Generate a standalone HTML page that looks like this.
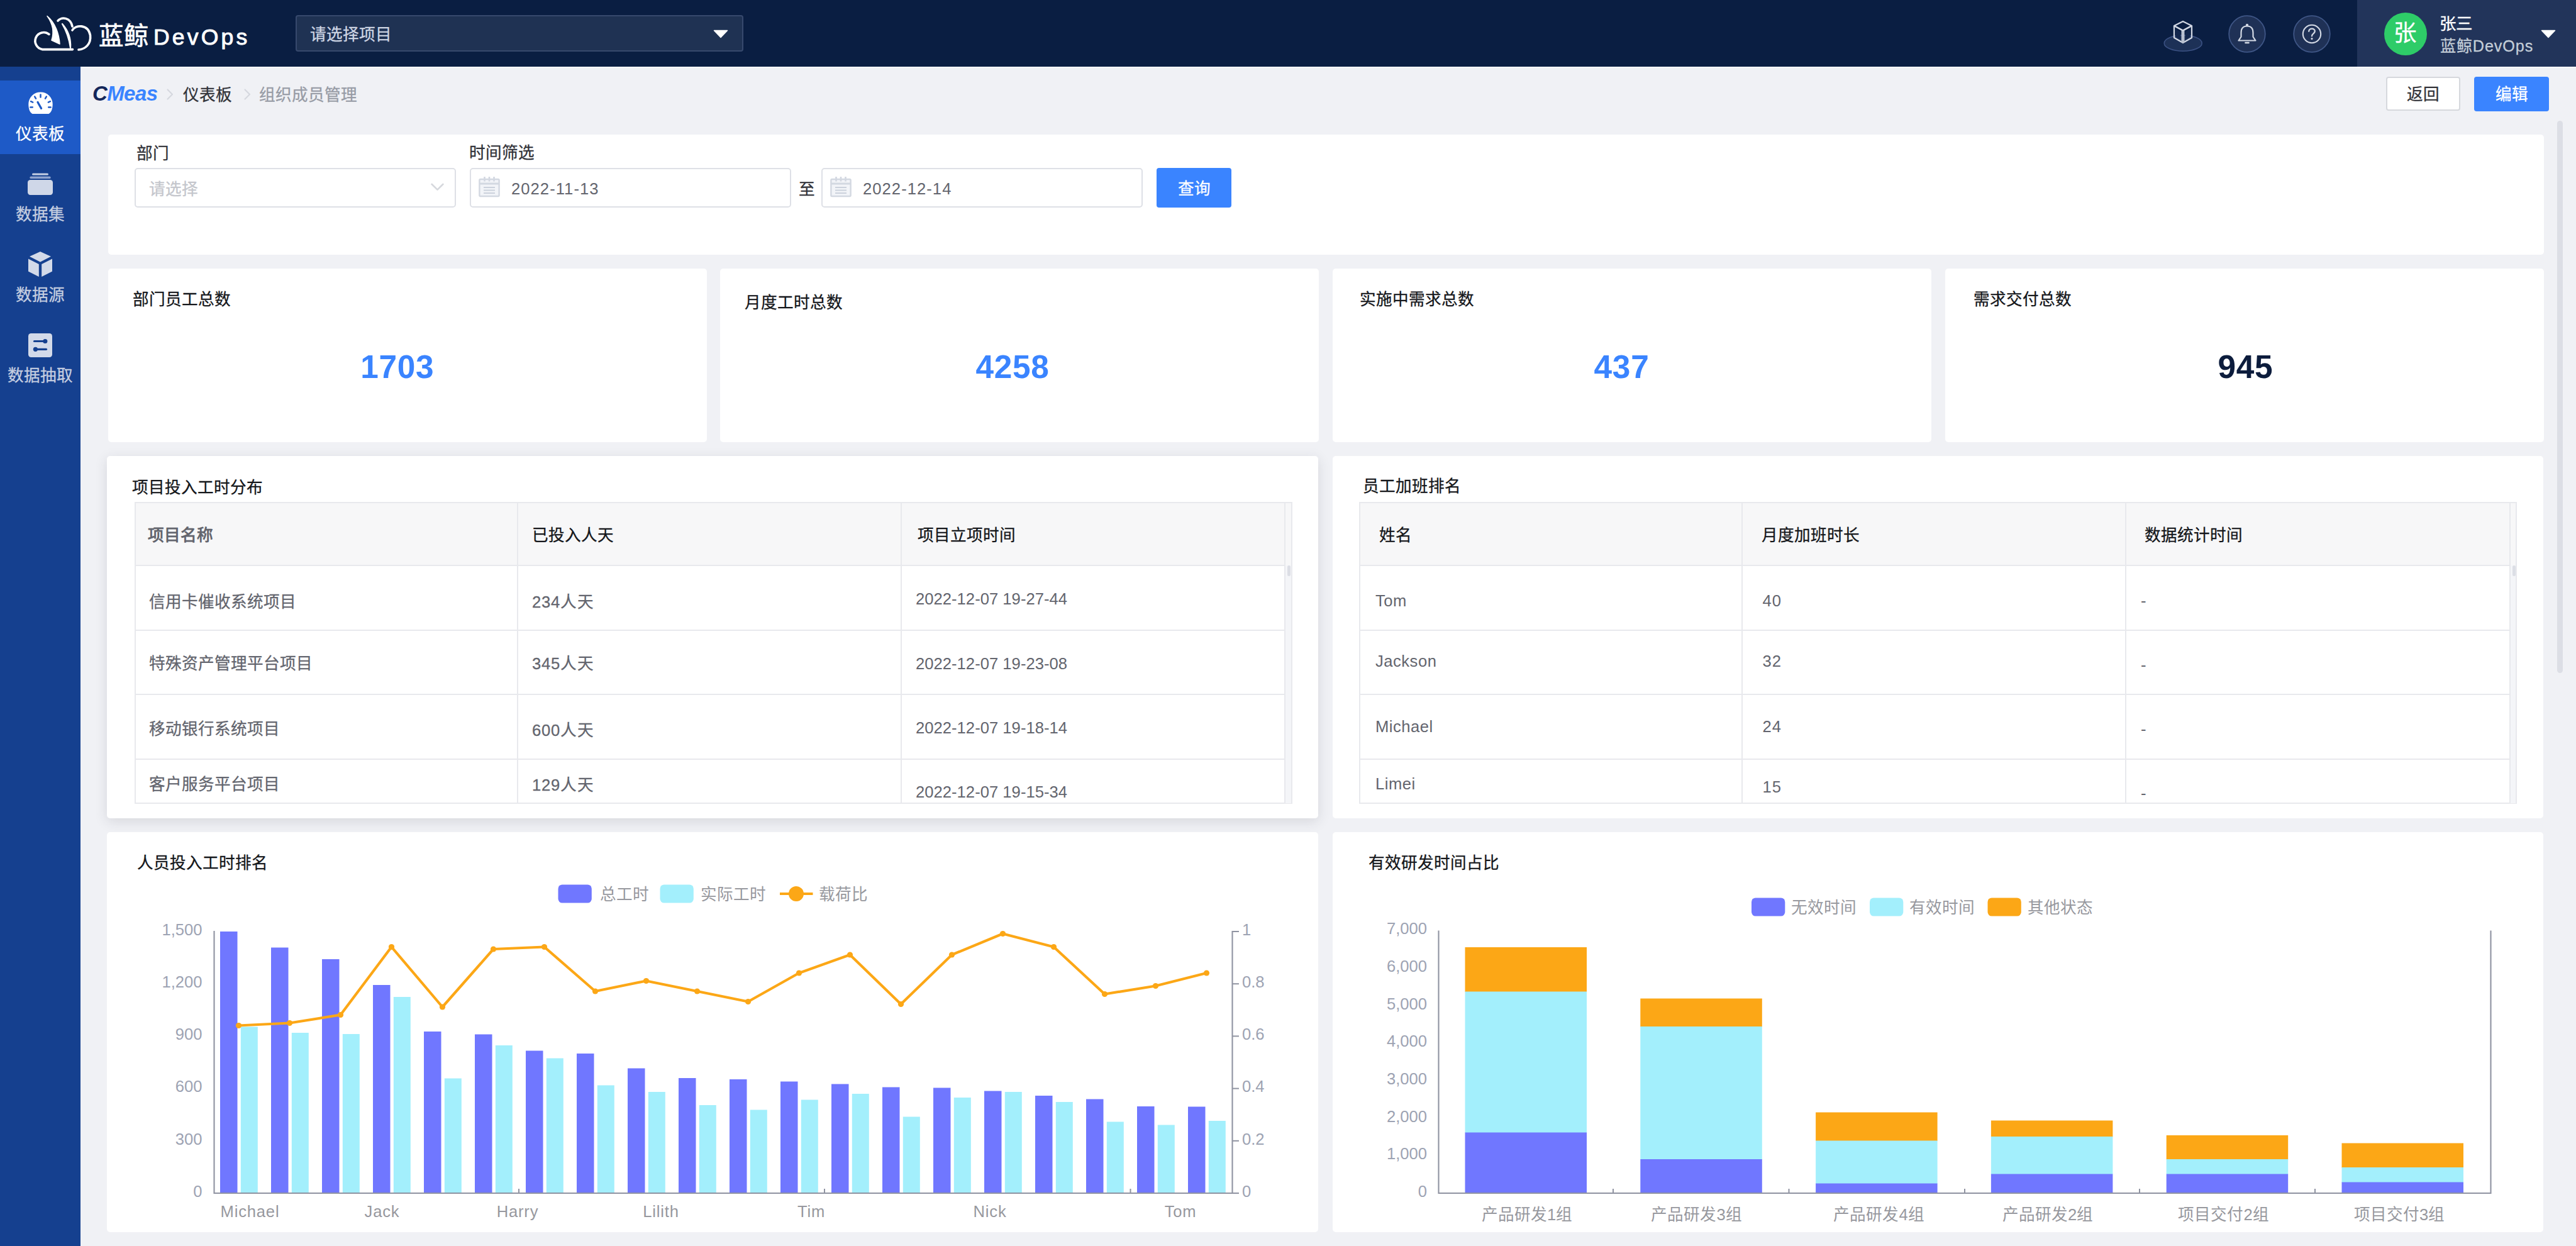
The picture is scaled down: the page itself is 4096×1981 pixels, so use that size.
<!DOCTYPE html>
<html lang="zh-CN"><head><meta charset="utf-8"><title>CMeas</title>
<style>
html,body{margin:0;padding:0;overflow:hidden}
body{width:4096px;height:1981px;overflow:hidden;position:relative;background:#f0f1f5;font-family:"Liberation Sans",sans-serif;}
.t{position:absolute;white-space:nowrap;margin:0;padding:0}
.b{position:absolute;box-sizing:border-box}
svg{position:absolute;overflow:visible}
</style></head><body>
<div class="b" style="left:128.00px;top:106.00px;width:3968.00px;height:2.40px;background:#fbfcff;"></div>
<div class="b" style="left:0.00px;top:0.00px;width:4096.00px;height:106.20px;background:#0a1e42;"></div>
<div class="b" style="left:3748.00px;top:0.00px;width:348.00px;height:106.20px;background:#22345a;"></div>
<svg style="left:52px;top:22px" width="96" height="62" viewBox="0 0 96 62" fill="none" stroke="#fff" stroke-width="3.6" stroke-linecap="round" stroke-linejoin="round">
<path d="M26 32.5 A13.6 13.6 0 1 0 15.5 56.6 L63.5 56.6"/>
<path d="M40 11 C47 4 60 6 63 20"/>
<path d="M63 26 C68 17 88 16 91.5 34 C93 48 84 56 73 57"/>
<path d="M23 3.5 C36 14 42 32 43 48 L30 42 C34 30 32 16 23 3.5 Z" fill="#fff" stroke-width="1.5"/>
<path d="M47 16 C56 26 61 40 60 54 C58 40 54 28 47 16 Z" fill="#fff" stroke-width="2.2"/>
</svg>
<div class="t" style="top:29.91px;font-size:39.5px;line-height:55.3px;color:#fff;left:156.50px;-webkit-text-stroke:0.7px;">蓝鲸</div>
<div class="t" style="top:34.71px;font-size:35.5px;line-height:49.7px;color:#fff;letter-spacing:4.2px;left:244.00px;-webkit-text-stroke:0.95px;">DevOps</div>
<div class="b" style="left:470.00px;top:24.00px;width:712.00px;height:58.00px;background:#1f3253;border:2px solid #37496d;border-radius:4px;"></div>
<div class="t" style="top:38.37px;font-size:25.6px;line-height:35.84px;color:#cfd6e4;-webkit-text-stroke:0.3px;left:492.50px;">请选择项目</div>
<svg style="left:1134px;top:47px" width="24" height="14" viewBox="0 0 24 14"><path d="M1.5 1.5 L22.5 1.5 L12 12.5 Z" fill="#fff" stroke="#fff" stroke-width="1.5" stroke-linejoin="round"/></svg>
<svg style="left:3436px;top:28px" width="72" height="58" viewBox="0 0 72 58" fill="none">
<ellipse cx="35.2" cy="40.7" rx="30" ry="12.6" fill="#1d3157" stroke="#3b5183" stroke-width="1.6"/>
<g stroke="#d0d6e2" stroke-width="2.3" stroke-linejoin="round">
<path d="M35 6 L49 13 L35 20.5 L21 13 Z" fill="#0a1e42"/>
<path d="M21 13 L21 32 L35 40 L49 32 L49 13"/>
<path d="M35 20.5 L35 40" stroke-width="5" stroke="#b9c1d0"/>
<path d="M21 13 L35 20.5 L49 13" />
</g>
<path d="M23.5 18.5 L31 22.5 L31 34.5 L23.5 30 Z M39 22.5 L46.5 18.5 L46.5 30 L39 34.5 Z" fill="#12264c"/>
</svg>
<svg style="left:3543px;top:23.5px" width="60" height="60" viewBox="0 0 60 60" fill="none">
<circle cx="30" cy="30" r="28.8" fill="#1f3156" stroke="#3f5686" stroke-width="1.8"/>
<path d="M30 17.5 C22 17.5 20.5 23.5 20.5 28 L20.5 34.5 L16.5 40.5 L43.5 40.5 L39.5 34.5 L39.5 28 C39.5 23.5 38 17.5 30 17.5 Z" stroke="#d3d9e4" stroke-width="2.2" stroke-linejoin="round"/>
<circle cx="30" cy="16" r="2.2" fill="#d3d9e4"/>
<path d="M27.4 44 L32.6 44" stroke="#d3d9e4" stroke-width="2.4" stroke-linecap="round"/>
</svg>
<svg style="left:3646px;top:23.5px" width="60" height="60" viewBox="0 0 60 60" fill="none">
<circle cx="30" cy="30" r="28.8" fill="#1f3156" stroke="#3f5686" stroke-width="1.8"/>
<circle cx="30" cy="30" r="14.2" stroke="#d3d9e4" stroke-width="2.1"/>
<path d="M25.2 25.8 C25.4 20.5 34.8 20.3 34.8 25.6 C34.8 29.4 30 29.2 30 33.4" stroke="#d3d9e4" stroke-width="2.3" stroke-linecap="round"/>
<circle cx="30" cy="37.6" r="1.6" fill="#d3d9e4"/>
</svg>
<div class="b" style="left:3790.5px;top:19.5px;width:68px;height:68px;border-radius:50%;background:#2ecc68"></div>
<div class="t" style="top:27.21px;font-size:36.5px;line-height:51.1px;color:#fff;-webkit-text-stroke:0.3px;left:3673.60px;width:300px;text-align:center;">张</div>
<div class="t" style="top:19.90px;font-size:26.5px;line-height:37.1px;color:#fff;-webkit-text-stroke:0.3px;left:3879.00px;">张三</div>
<div class="t" style="top:55.72px;font-size:25.2px;line-height:35.28px;color:#c3cdd7;-webkit-text-stroke:0.3px;letter-spacing:0.9px;left:3880.00px;">蓝鲸DevOps</div>
<svg style="left:4040px;top:47px" width="24" height="14" viewBox="0 0 24 14"><path d="M1.5 1.5 L22.5 1.5 L12 12.5 Z" fill="#fff" stroke="#fff" stroke-width="1.5" stroke-linejoin="round"/></svg>
<div class="b" style="left:0.00px;top:105.60px;width:128.00px;height:1875.40px;background:#15408f;"></div>
<div class="b" style="left:0.00px;top:128.00px;width:128.00px;height:117.30px;background:#1e5ac7;"></div>
<svg style="left:44px;top:146px" width="41" height="36" viewBox="0 0 41 36">
<path d="M7.5 35 C3.5 33.4 1.3 27 1.3 19.6 A19.2 19.2 0 0 1 39.7 19.6 C39.7 27 37.5 33.4 33.5 35 Z" fill="#fff"/>
<g stroke="#1e5ac7" stroke-width="2.5" stroke-linecap="round">
<path d="M20.5 4.6 L20.5 8.4"/><path d="M11.2 7.6 L13 10.6"/><path d="M29.8 7.6 L28 10.6"/>
<path d="M5 15.2 L8.2 16.6"/><path d="M36 15.2 L32.8 16.6"/>
<path d="M4.4 24.6 L7.8 24.4"/><path d="M36.6 24.6 L33.2 24.4"/>
<path d="M16 16.5 L21.6 26.4" stroke-width="3.2"/>
</g></svg>
<div class="t" style="top:196.37px;font-size:25.6px;line-height:35.84px;color:#fff;-webkit-text-stroke:0.3px;left:-86.00px;width:300px;text-align:center;">仪表板</div>
<svg style="left:44px;top:274.5px" width="40" height="35" viewBox="0 0 40 35">
<rect x="0" y="11" width="40" height="24" rx="4.2" fill="#cfd7e8"/>
<rect x="3.4" y="5.4" width="33.2" height="3.6" rx="1.6" fill="#8fa4cf"/>
<rect x="7" y="0.6" width="26" height="3" rx="1.5" fill="#c5cfe4"/>
</svg>
<div class="t" style="top:324.37px;font-size:25.6px;line-height:35.84px;color:#c5cee0;-webkit-text-stroke:0.3px;left:-86.00px;width:300px;text-align:center;">数据集</div>
<svg style="left:45px;top:400px" width="38" height="40" viewBox="0 0 38 40" fill="#d3dae9">
<path d="M19 0 L36 7.8 L19 16.6 L2 7.8 Z"/>
<path d="M0 11.6 L16.8 20 L16.8 40 L0 31.4 Z"/>
<path d="M38 11.6 L21.2 20 L21.2 40 L38 31.4 Z"/>
</svg>
<div class="t" style="top:452.37px;font-size:25.6px;line-height:35.84px;color:#c5cee0;-webkit-text-stroke:0.3px;left:-86.00px;width:300px;text-align:center;">数据源</div>
<svg style="left:45px;top:529.5px" width="38" height="38" viewBox="0 0 38 38">
<rect x="0" y="0" width="38" height="38" rx="4.4" fill="#d3dae9"/>
<g stroke="#15408f" stroke-width="3.2" stroke-linecap="round">
<path d="M9.5 12.5 L27 12.5"/><path d="M11 25.3 L28.5 25.3"/></g>
<circle cx="26.8" cy="12.5" r="3.6" fill="#15408f"/><circle cx="11.4" cy="25.3" r="3.6" fill="#15408f"/>
</svg>
<div class="t" style="top:580.37px;font-size:25.6px;line-height:35.84px;color:#c5cee0;-webkit-text-stroke:0.3px;left:-86.00px;width:300px;text-align:center;">数据抽取</div>
<div class="t" style="left:147px;top:125px;font-size:33px;line-height:48px;font-weight:700;font-style:italic;letter-spacing:-0.6px;color:#3a84ff"><span style="color:#14275a">C</span>Meas</div>
<svg style="left:264.5px;top:141px" width="11" height="18" viewBox="0 0 11 18" fill="none"><path d="M1.5 1.5 L9 9 L1.5 16.5" stroke="#d6d8df" stroke-width="2.2" stroke-linecap="round" stroke-linejoin="round"/></svg>
<svg style="left:388px;top:141px" width="11" height="18" viewBox="0 0 11 18" fill="none"><path d="M1.5 1.5 L9 9 L1.5 16.5" stroke="#d6d8df" stroke-width="2.2" stroke-linecap="round" stroke-linejoin="round"/></svg>
<div class="t" style="top:133.87px;font-size:25.6px;line-height:35.84px;color:#313238;-webkit-text-stroke:0.3px;left:291.00px;">仪表板</div>
<div class="t" style="top:133.87px;font-size:25.6px;line-height:35.84px;color:#979ba5;-webkit-text-stroke:0.3px;left:412.00px;">组织成员管理</div>
<div class="b" style="left:3794.00px;top:122.00px;width:117.50px;height:54.00px;background:#fff;border:2px solid #d6d8dd;border-radius:4px;"></div>
<div class="t" style="top:133.37px;font-size:25.6px;line-height:35.84px;color:#313238;-webkit-text-stroke:0.3px;left:3702.75px;width:300px;text-align:center;">返回</div>
<div class="b" style="left:3934.00px;top:121.50px;width:119.00px;height:55.00px;background:#3a84ff;border-radius:4px;"></div>
<div class="t" style="top:133.37px;font-size:25.6px;line-height:35.84px;color:#fff;-webkit-text-stroke:0.3px;left:3843.50px;width:300px;text-align:center;">编辑</div>
<div class="b" style="left:4065.50px;top:192.00px;width:9.00px;height:878.00px;background:#dcdee5;border-radius:5px;"></div>
<div class="b" style="left:171.50px;top:214.00px;width:3873.00px;height:191.20px;background:#fff;border-radius:5px;"></div>
<div class="t" style="top:227.37px;font-size:25.6px;line-height:35.84px;color:#313238;-webkit-text-stroke:0.3px;left:217.00px;">部门</div>
<div class="t" style="top:226.37px;font-size:25.6px;line-height:35.84px;color:#313238;-webkit-text-stroke:0.3px;left:746.00px;">时间筛选</div>
<div class="b" style="left:214.00px;top:267.00px;width:510.60px;height:62.60px;background:#fff;border:2.2px solid #dee0e6;border-radius:5px;"></div>
<div class="t" style="top:283.87px;font-size:25.6px;line-height:35.84px;color:#c4c6cc;-webkit-text-stroke:0.3px;left:237.00px;">请选择</div>
<svg style="left:685px;top:290.5px" width="21" height="13" viewBox="0 0 21 13" fill="none"><path d="M1.5 1.8 L10.5 10.6 L19.5 1.8" stroke="#d6d8dd" stroke-width="2.6" stroke-linecap="round" stroke-linejoin="round"/></svg>
<div class="b" style="left:747.00px;top:267.00px;width:511.00px;height:62.60px;background:#fff;border:2.2px solid #dee0e6;border-radius:5px;"></div>
<svg style="left:760.5px;top:280px" width="34" height="34" viewBox="0 0 34 34" fill="none" stroke="#d3d8e1" stroke-width="2.4">
<rect x="1.4" y="5" width="31.2" height="27" rx="1.5" fill="#f2f4f8"/>
<path d="M1.4 12 L32.6 12" stroke-width="3"/><path d="M9.5 1 L9.5 8.5 M17 1 L17 8.5 M24.5 1 L24.5 8.5" stroke-width="2.6"/>
<path d="M8 18 L26 18 M8 22.5 L26 22.5 M8 27 L26 27" stroke="#cbd1dc" stroke-width="2.2"/></svg>
<div class="t" style="top:282.85px;font-size:25.6px;line-height:35.84px;color:#63656e;letter-spacing:1.05px;left:813.00px;">2022-11-13</div>
<div class="t" style="top:283.87px;font-size:25.6px;line-height:35.84px;color:#313238;-webkit-text-stroke:0.3px;left:1269.50px;">至</div>
<div class="b" style="left:1305.60px;top:267.00px;width:511.00px;height:62.60px;background:#fff;border:2.2px solid #dee0e6;border-radius:5px;"></div>
<svg style="left:1319.5px;top:280px" width="34" height="34" viewBox="0 0 34 34" fill="none" stroke="#d3d8e1" stroke-width="2.4">
<rect x="1.4" y="5" width="31.2" height="27" rx="1.5" fill="#f2f4f8"/>
<path d="M1.4 12 L32.6 12" stroke-width="3"/><path d="M9.5 1 L9.5 8.5 M17 1 L17 8.5 M24.5 1 L24.5 8.5" stroke-width="2.6"/>
<path d="M8 18 L26 18 M8 22.5 L26 22.5 M8 27 L26 27" stroke="#cbd1dc" stroke-width="2.2"/></svg>
<div class="t" style="top:282.85px;font-size:25.6px;line-height:35.84px;color:#63656e;letter-spacing:1.05px;left:1372.00px;">2022-12-14</div>
<div class="b" style="left:1839.00px;top:267.00px;width:119.00px;height:63.40px;background:#3a84ff;border-radius:4px;"></div>
<div class="t" style="top:283.37px;font-size:25.6px;line-height:35.84px;color:#fff;-webkit-text-stroke:0.3px;left:1748.75px;width:300px;text-align:center;">查询</div>
<div class="b" style="left:171.50px;top:427.30px;width:952.20px;height:276.10px;background:#fff;border-radius:5px;"></div>
<div class="b" style="left:1145.30px;top:427.30px;width:952.20px;height:276.10px;background:#fff;border-radius:5px;"></div>
<div class="b" style="left:2118.70px;top:427.30px;width:952.20px;height:276.10px;background:#fff;border-radius:5px;"></div>
<div class="b" style="left:3092.50px;top:427.30px;width:952.20px;height:276.10px;background:#fff;border-radius:5px;"></div>
<div class="t" style="top:458.87px;font-size:25.6px;line-height:35.84px;color:#14161a;-webkit-text-stroke:0.3px;left:211.00px;">部门员工总数</div>
<div class="t" style="top:463.87px;font-size:25.6px;line-height:35.84px;color:#14161a;-webkit-text-stroke:0.3px;left:1184.00px;">月度工时总数</div>
<div class="t" style="top:458.87px;font-size:25.6px;line-height:35.84px;color:#14161a;-webkit-text-stroke:0.3px;left:2161.50px;">实施中需求总数</div>
<div class="t" style="top:458.87px;font-size:25.6px;line-height:35.84px;color:#14161a;-webkit-text-stroke:0.3px;left:3137.50px;">需求交付总数</div>
<div class="t" style="top:552.54px;font-size:51.4px;line-height:60px;color:#3a84ff;font-weight:700;letter-spacing:0.7px;left:481.75px;width:300px;text-align:center;">1703</div>
<div class="t" style="top:552.54px;font-size:51.4px;line-height:60px;color:#3a84ff;font-weight:700;letter-spacing:0.7px;left:1460.00px;width:300px;text-align:center;">4258</div>
<div class="t" style="top:552.54px;font-size:51.4px;line-height:60px;color:#3a84ff;font-weight:700;letter-spacing:0.7px;left:2428.50px;width:300px;text-align:center;">437</div>
<div class="t" style="top:552.54px;font-size:51.4px;line-height:60px;color:#0c1c3c;font-weight:700;letter-spacing:0.7px;left:3420.30px;width:300px;text-align:center;">945</div>
<div class="b" style="left:170.00px;top:725.00px;width:1926.40px;height:576.30px;background:#fff;border-radius:5px;box-shadow:0 5px 20px rgba(45,45,60,0.13);"></div>
<div class="b" style="left:2118.60px;top:725.00px;width:1925.90px;height:576.30px;background:#fff;border-radius:5px;"></div>
<div class="t" style="top:758.27px;font-size:25.6px;line-height:35.84px;color:#14161a;-webkit-text-stroke:0.3px;left:210.20px;">项目投入工时分布</div>
<div class="t" style="top:756.37px;font-size:25.6px;line-height:35.84px;color:#14161a;-webkit-text-stroke:0.3px;left:2167.00px;">员工加班排名</div>
<div class="b" style="left:214.50px;top:799.00px;width:1839.00px;height:100.00px;background:#f7f7f8;"></div>
<div class="b" style="left:213.50px;top:798.00px;width:1841.00px;height:479.50px;border:2px solid #e8e9ed;"></div>
<div class="b" style="left:214.50px;top:898.00px;width:1828.00px;height:2.00px;background:#e8e9ed;"></div>
<div class="b" style="left:214.50px;top:1000.50px;width:1828.00px;height:2.00px;background:#e8e9ed;"></div>
<div class="b" style="left:214.50px;top:1103.00px;width:1828.00px;height:2.00px;background:#e8e9ed;"></div>
<div class="b" style="left:214.50px;top:1205.50px;width:1828.00px;height:2.00px;background:#e8e9ed;"></div>
<div class="b" style="left:821.50px;top:799.00px;width:2.00px;height:477.50px;background:#e8e9ed;"></div>
<div class="b" style="left:1431.50px;top:799.00px;width:2.00px;height:477.50px;background:#e8e9ed;"></div>
<div class="b" style="left:2041.50px;top:799.00px;width:2.00px;height:477.50px;background:#e8e9ed;"></div>
<div class="b" style="left:2043.50px;top:899.00px;width:9.00px;height:377.50px;background:#f4f5f8;"></div>
<div class="b" style="left:2046.50px;top:899.00px;width:5.00px;height:17.00px;background:#dcdee5;border-radius:3px;"></div>
<div class="b" style="left:2162.00px;top:799.00px;width:1839.00px;height:100.00px;background:#f7f7f8;"></div>
<div class="b" style="left:2161.00px;top:798.00px;width:1841.00px;height:479.50px;border:2px solid #e8e9ed;"></div>
<div class="b" style="left:2162.00px;top:898.00px;width:1828.50px;height:2.00px;background:#e8e9ed;"></div>
<div class="b" style="left:2162.00px;top:1000.50px;width:1828.50px;height:2.00px;background:#e8e9ed;"></div>
<div class="b" style="left:2162.00px;top:1103.00px;width:1828.50px;height:2.00px;background:#e8e9ed;"></div>
<div class="b" style="left:2162.00px;top:1205.50px;width:1828.50px;height:2.00px;background:#e8e9ed;"></div>
<div class="b" style="left:2769.00px;top:799.00px;width:2.00px;height:477.50px;background:#e8e9ed;"></div>
<div class="b" style="left:3379.00px;top:799.00px;width:2.00px;height:477.50px;background:#e8e9ed;"></div>
<div class="b" style="left:3989.50px;top:799.00px;width:2.00px;height:477.50px;background:#e8e9ed;"></div>
<div class="b" style="left:3991.50px;top:899.00px;width:8.50px;height:377.50px;background:#f4f5f8;"></div>
<div class="b" style="left:3994.50px;top:899.00px;width:5.00px;height:17.00px;background:#dcdee5;border-radius:3px;"></div>
<div class="t" style="top:833.87px;font-size:25.6px;line-height:35.84px;color:#63656e;font-weight:700;left:234.50px;">项目名称</div>
<div class="t" style="top:833.87px;font-size:25.6px;line-height:35.84px;color:#14161a;-webkit-text-stroke:0.3px;left:845.50px;">已投入人天</div>
<div class="t" style="top:833.87px;font-size:25.6px;line-height:35.84px;color:#14161a;-webkit-text-stroke:0.3px;left:1458.50px;">项目立项时间</div>
<div class="t" style="top:939.87px;font-size:25.6px;line-height:35.84px;color:#63656e;-webkit-text-stroke:0.3px;left:237.00px;">信用卡催收系统项目</div>
<div class="t" style="top:939.87px;font-size:25.6px;line-height:35.84px;color:#63656e;-webkit-text-stroke:0.3px;letter-spacing:0.8px;left:846.00px;">234人天</div>
<div class="t" style="top:935.35px;font-size:25.6px;line-height:35.84px;color:#63656e;letter-spacing:0.03px;left:1456.00px;">2022-12-07 19-27-44</div>
<div class="t" style="top:1037.87px;font-size:25.6px;line-height:35.84px;color:#63656e;-webkit-text-stroke:0.3px;left:237.00px;">特殊资产管理平台项目</div>
<div class="t" style="top:1037.87px;font-size:25.6px;line-height:35.84px;color:#63656e;-webkit-text-stroke:0.3px;letter-spacing:0.8px;left:846.00px;">345人天</div>
<div class="t" style="top:1037.85px;font-size:25.6px;line-height:35.84px;color:#63656e;letter-spacing:0.03px;left:1456.00px;">2022-12-07 19-23-08</div>
<div class="t" style="top:1141.87px;font-size:25.6px;line-height:35.84px;color:#63656e;-webkit-text-stroke:0.3px;left:237.00px;">移动银行系统项目</div>
<div class="t" style="top:1143.87px;font-size:25.6px;line-height:35.84px;color:#63656e;-webkit-text-stroke:0.3px;letter-spacing:0.8px;left:846.00px;">600人天</div>
<div class="t" style="top:1140.35px;font-size:25.6px;line-height:35.84px;color:#63656e;letter-spacing:0.03px;left:1456.00px;">2022-12-07 19-18-14</div>
<div class="t" style="top:1229.87px;font-size:25.6px;line-height:35.84px;color:#63656e;-webkit-text-stroke:0.3px;left:237.00px;">客户服务平台项目</div>
<div class="t" style="top:1231.37px;font-size:25.6px;line-height:35.84px;color:#63656e;-webkit-text-stroke:0.3px;letter-spacing:0.8px;left:846.00px;">129人天</div>
<div class="t" style="top:1241.85px;font-size:25.6px;line-height:35.84px;color:#63656e;letter-spacing:0.03px;left:1456.00px;">2022-12-07 19-15-34</div>
<div class="t" style="top:833.87px;font-size:25.6px;line-height:35.84px;color:#14161a;-webkit-text-stroke:0.3px;left:2193.00px;">姓名</div>
<div class="t" style="top:833.87px;font-size:25.6px;line-height:35.84px;color:#14161a;-webkit-text-stroke:0.3px;left:2800.50px;">月度加班时长</div>
<div class="t" style="top:833.87px;font-size:25.6px;line-height:35.84px;color:#14161a;-webkit-text-stroke:0.3px;left:3410.00px;">数据统计时间</div>
<div class="t" style="top:937.85px;font-size:25.6px;line-height:35.84px;color:#63656e;letter-spacing:0.5px;left:2187.00px;">Tom</div>
<div class="t" style="top:937.85px;font-size:25.6px;line-height:35.84px;color:#63656e;letter-spacing:0.9px;left:2802.50px;">40</div>
<div class="t" style="top:937.85px;font-size:25.6px;line-height:35.84px;color:#63656e;left:3404.00px;">-</div>
<div class="t" style="top:1033.85px;font-size:25.6px;line-height:35.84px;color:#63656e;letter-spacing:0.5px;left:2187.00px;">Jackson</div>
<div class="t" style="top:1033.85px;font-size:25.6px;line-height:35.84px;color:#63656e;letter-spacing:0.9px;left:2802.50px;">32</div>
<div class="t" style="top:1039.85px;font-size:25.6px;line-height:35.84px;color:#63656e;left:3404.00px;">-</div>
<div class="t" style="top:1137.85px;font-size:25.6px;line-height:35.84px;color:#63656e;letter-spacing:0.5px;left:2187.00px;">Michael</div>
<div class="t" style="top:1137.85px;font-size:25.6px;line-height:35.84px;color:#63656e;letter-spacing:0.9px;left:2802.50px;">24</div>
<div class="t" style="top:1141.85px;font-size:25.6px;line-height:35.84px;color:#63656e;left:3404.00px;">-</div>
<div class="t" style="top:1229.35px;font-size:25.6px;line-height:35.84px;color:#63656e;letter-spacing:0.5px;left:2187.00px;">Limei</div>
<div class="t" style="top:1233.85px;font-size:25.6px;line-height:35.84px;color:#63656e;letter-spacing:0.9px;left:2802.50px;">15</div>
<div class="t" style="top:1244.35px;font-size:25.6px;line-height:35.84px;color:#63656e;left:3404.00px;">-</div>
<div class="b" style="left:172.00px;top:1278.50px;width:1922.00px;height:20.50px;background:#fff;"></div>
<div class="b" style="left:2121.00px;top:1278.50px;width:1921.00px;height:20.50px;background:#fff;"></div>
<div class="b" style="left:170.00px;top:1323.30px;width:1926.40px;height:636.20px;background:#fff;border-radius:5px;"></div>
<div class="b" style="left:2118.60px;top:1323.30px;width:1925.90px;height:636.20px;background:#fff;border-radius:5px;"></div>
<div class="t" style="top:1355.37px;font-size:25.6px;line-height:35.84px;color:#14161a;-webkit-text-stroke:0.3px;left:217.50px;">人员投入工时排名</div>
<div class="t" style="top:1355.37px;font-size:25.6px;line-height:35.84px;color:#14161a;-webkit-text-stroke:0.3px;left:2175.50px;">有效研发时间占比</div>
<svg style="left:0;top:0" width="4096" height="1981" viewBox="0 0 4096 1981">
<rect x="350.00" y="1481.00" width="27.5" height="416.00" fill="#7077ff"/>
<rect x="382.80" y="1632.50" width="27" height="264.50" fill="#a3effc"/>
<rect x="431.00" y="1506.50" width="27.5" height="390.50" fill="#7077ff"/>
<rect x="463.80" y="1642.00" width="27" height="255.00" fill="#a3effc"/>
<rect x="512.00" y="1525.00" width="27.5" height="372.00" fill="#7077ff"/>
<rect x="544.80" y="1644.00" width="27" height="253.00" fill="#a3effc"/>
<rect x="593.00" y="1566.00" width="27.5" height="331.00" fill="#7077ff"/>
<rect x="625.80" y="1585.00" width="27" height="312.00" fill="#a3effc"/>
<rect x="674.00" y="1640.00" width="27.5" height="257.00" fill="#7077ff"/>
<rect x="706.80" y="1714.50" width="27" height="182.50" fill="#a3effc"/>
<rect x="755.00" y="1644.50" width="27.5" height="252.50" fill="#7077ff"/>
<rect x="787.80" y="1662.00" width="27" height="235.00" fill="#a3effc"/>
<rect x="836.00" y="1670.50" width="27.5" height="226.50" fill="#7077ff"/>
<rect x="868.80" y="1682.50" width="27" height="214.50" fill="#a3effc"/>
<rect x="917.00" y="1675.00" width="27.5" height="222.00" fill="#7077ff"/>
<rect x="949.80" y="1725.50" width="27" height="171.50" fill="#a3effc"/>
<rect x="998.00" y="1698.50" width="27.5" height="198.50" fill="#7077ff"/>
<rect x="1030.80" y="1736.00" width="27" height="161.00" fill="#a3effc"/>
<rect x="1079.00" y="1714.00" width="27.5" height="183.00" fill="#7077ff"/>
<rect x="1111.80" y="1757.00" width="27" height="140.00" fill="#a3effc"/>
<rect x="1160.00" y="1716.00" width="27.5" height="181.00" fill="#7077ff"/>
<rect x="1192.80" y="1764.50" width="27" height="132.50" fill="#a3effc"/>
<rect x="1241.00" y="1719.50" width="27.5" height="177.50" fill="#7077ff"/>
<rect x="1273.80" y="1748.50" width="27" height="148.50" fill="#a3effc"/>
<rect x="1322.00" y="1723.50" width="27.5" height="173.50" fill="#7077ff"/>
<rect x="1354.80" y="1739.00" width="27" height="158.00" fill="#a3effc"/>
<rect x="1403.00" y="1728.50" width="27.5" height="168.50" fill="#7077ff"/>
<rect x="1435.80" y="1775.50" width="27" height="121.50" fill="#a3effc"/>
<rect x="1484.00" y="1729.50" width="27.5" height="167.50" fill="#7077ff"/>
<rect x="1516.80" y="1745.00" width="27" height="152.00" fill="#a3effc"/>
<rect x="1565.00" y="1734.50" width="27.5" height="162.50" fill="#7077ff"/>
<rect x="1597.80" y="1736.00" width="27" height="161.00" fill="#a3effc"/>
<rect x="1646.00" y="1742.00" width="27.5" height="155.00" fill="#7077ff"/>
<rect x="1678.80" y="1752.00" width="27" height="145.00" fill="#a3effc"/>
<rect x="1727.00" y="1747.50" width="27.5" height="149.50" fill="#7077ff"/>
<rect x="1759.80" y="1783.50" width="27" height="113.50" fill="#a3effc"/>
<rect x="1808.00" y="1759.00" width="27.5" height="138.00" fill="#7077ff"/>
<rect x="1840.80" y="1788.50" width="27" height="108.50" fill="#a3effc"/>
<rect x="1889.00" y="1759.50" width="27.5" height="137.50" fill="#7077ff"/>
<rect x="1921.80" y="1782.00" width="27" height="115.00" fill="#a3effc"/>
<path d="M340.5 1480 L340.5 1898.0 M339.5 1897.0 L1960 1897.0 M1959.5 1480 L1959.5 1898.0" stroke="#8f93a1" stroke-width="2.1" fill="none"/>
<path d="M825 1890.0 L825 1897.0" stroke="#8f93a1" stroke-width="2" fill="none"/>
<path d="M1311 1890.0 L1311 1897.0" stroke="#8f93a1" stroke-width="2" fill="none"/>
<path d="M1797.5 1890.0 L1797.5 1897.0" stroke="#8f93a1" stroke-width="2" fill="none"/>
<path d="M1959.5 1481.00 L1970 1481.00" stroke="#8f93a1" stroke-width="2" fill="none"/>
<path d="M1959.5 1564.20 L1970 1564.20" stroke="#8f93a1" stroke-width="2" fill="none"/>
<path d="M1959.5 1647.40 L1970 1647.40" stroke="#8f93a1" stroke-width="2" fill="none"/>
<path d="M1959.5 1730.60 L1970 1730.60" stroke="#8f93a1" stroke-width="2" fill="none"/>
<path d="M1959.5 1813.80 L1970 1813.80" stroke="#8f93a1" stroke-width="2" fill="none"/>
<path d="M1959.5 1897.00 L1970 1897.00" stroke="#8f93a1" stroke-width="2" fill="none"/>
<polyline points="379.50,1630.50 460.50,1626.50 541.50,1613.50 622.50,1505.50 703.50,1601.00 784.50,1509.00 865.50,1505.50 946.50,1576.00 1027.50,1559.50 1108.50,1576.00 1189.50,1592.50 1270.50,1547.00 1351.50,1518.00 1432.50,1596.50 1513.50,1518.00 1594.50,1484.50 1675.50,1505.50 1756.50,1580.50 1837.50,1567.50 1918.50,1547.00" fill="none" stroke="#fca716" stroke-width="4.2" stroke-linejoin="round"/>
<circle cx="379.50" cy="1630.50" r="4.6" fill="#fca716"/>
<circle cx="460.50" cy="1626.50" r="4.6" fill="#fca716"/>
<circle cx="541.50" cy="1613.50" r="4.6" fill="#fca716"/>
<circle cx="622.50" cy="1505.50" r="4.6" fill="#fca716"/>
<circle cx="703.50" cy="1601.00" r="4.6" fill="#fca716"/>
<circle cx="784.50" cy="1509.00" r="4.6" fill="#fca716"/>
<circle cx="865.50" cy="1505.50" r="4.6" fill="#fca716"/>
<circle cx="946.50" cy="1576.00" r="4.6" fill="#fca716"/>
<circle cx="1027.50" cy="1559.50" r="4.6" fill="#fca716"/>
<circle cx="1108.50" cy="1576.00" r="4.6" fill="#fca716"/>
<circle cx="1189.50" cy="1592.50" r="4.6" fill="#fca716"/>
<circle cx="1270.50" cy="1547.00" r="4.6" fill="#fca716"/>
<circle cx="1351.50" cy="1518.00" r="4.6" fill="#fca716"/>
<circle cx="1432.50" cy="1596.50" r="4.6" fill="#fca716"/>
<circle cx="1513.50" cy="1518.00" r="4.6" fill="#fca716"/>
<circle cx="1594.50" cy="1484.50" r="4.6" fill="#fca716"/>
<circle cx="1675.50" cy="1505.50" r="4.6" fill="#fca716"/>
<circle cx="1756.50" cy="1580.50" r="4.6" fill="#fca716"/>
<circle cx="1837.50" cy="1567.50" r="4.6" fill="#fca716"/>
<circle cx="1918.50" cy="1547.00" r="4.6" fill="#fca716"/>
<rect x="887.5" y="1406.5" width="53.3" height="29" rx="6.4" fill="#7077ff"/>
<rect x="1049.5" y="1406.5" width="53.3" height="29" rx="6.4" fill="#a3effc"/>
<path d="M1240 1421 L1292.5 1421" stroke="#fca716" stroke-width="4.2"/><circle cx="1266" cy="1421" r="12" fill="#fca716"/>
<rect x="2329.50" y="1506.00" width="193.5" height="71.00" fill="#fca716"/>
<rect x="2329.50" y="1576.50" width="193.5" height="224.50" fill="#a3effc"/>
<rect x="2329.50" y="1800.50" width="193.5" height="96.50" fill="#7077ff"/>
<rect x="2608.30" y="1587.50" width="193.5" height="45.00" fill="#fca716"/>
<rect x="2608.30" y="1632.00" width="193.5" height="211.50" fill="#a3effc"/>
<rect x="2608.30" y="1843.00" width="193.5" height="54.00" fill="#7077ff"/>
<rect x="2887.10" y="1768.50" width="193.5" height="45.50" fill="#fca716"/>
<rect x="2887.10" y="1813.50" width="193.5" height="68.50" fill="#a3effc"/>
<rect x="2887.10" y="1881.50" width="193.5" height="15.50" fill="#7077ff"/>
<rect x="3165.90" y="1781.50" width="193.5" height="26.00" fill="#fca716"/>
<rect x="3165.90" y="1807.00" width="193.5" height="60.00" fill="#a3effc"/>
<rect x="3165.90" y="1866.50" width="193.5" height="30.50" fill="#7077ff"/>
<rect x="3444.70" y="1805.00" width="193.5" height="38.50" fill="#fca716"/>
<rect x="3444.70" y="1843.00" width="193.5" height="24.00" fill="#a3effc"/>
<rect x="3444.70" y="1866.50" width="193.5" height="30.50" fill="#7077ff"/>
<rect x="3723.50" y="1817.50" width="193.5" height="39.00" fill="#fca716"/>
<rect x="3723.50" y="1856.00" width="193.5" height="24.00" fill="#a3effc"/>
<rect x="3723.50" y="1879.50" width="193.5" height="17.50" fill="#7077ff"/>
<path d="M2287.5 1479.5 L2287.5 1898.0 M2286.5 1897.0 L3961.5 1897.0 M3960.5 1479.5 L3960.5 1898.0" stroke="#8f93a1" stroke-width="2.1" fill="none"/>
<path d="M2565 1890.0 L2565 1897.0" stroke="#8f93a1" stroke-width="2" fill="none"/>
<path d="M2844.5 1890.0 L2844.5 1897.0" stroke="#8f93a1" stroke-width="2" fill="none"/>
<path d="M3124 1890.0 L3124 1897.0" stroke="#8f93a1" stroke-width="2" fill="none"/>
<path d="M3402 1890.0 L3402 1897.0" stroke="#8f93a1" stroke-width="2" fill="none"/>
<path d="M3681 1890.0 L3681 1897.0" stroke="#8f93a1" stroke-width="2" fill="none"/>
<rect x="2785" y="1427.5" width="53.3" height="29" rx="6.4" fill="#7077ff"/>
<rect x="2973" y="1427.5" width="53.3" height="29" rx="6.4" fill="#a3effc"/>
<rect x="3160.5" y="1427.5" width="53.3" height="29" rx="6.4" fill="#fca716"/>
</svg>
<div class="t" style="top:1876.85px;font-size:25.6px;line-height:35.84px;color:#9da3b3;right:3774.50px;text-align:right;">0</div>
<div class="t" style="top:1793.65px;font-size:25.6px;line-height:35.84px;color:#9da3b3;right:3774.50px;text-align:right;">300</div>
<div class="t" style="top:1710.45px;font-size:25.6px;line-height:35.84px;color:#9da3b3;right:3774.50px;text-align:right;">600</div>
<div class="t" style="top:1627.25px;font-size:25.6px;line-height:35.84px;color:#9da3b3;right:3774.50px;text-align:right;">900</div>
<div class="t" style="top:1544.05px;font-size:25.6px;line-height:35.84px;color:#9da3b3;right:3774.50px;text-align:right;">1,200</div>
<div class="t" style="top:1460.85px;font-size:25.6px;line-height:35.84px;color:#9da3b3;right:3774.50px;text-align:right;">1,500</div>
<div class="t" style="top:1876.85px;font-size:25.6px;line-height:35.84px;color:#9da3b3;left:1975.00px;">0</div>
<div class="t" style="top:1793.65px;font-size:25.6px;line-height:35.84px;color:#9da3b3;left:1975.00px;">0.2</div>
<div class="t" style="top:1710.45px;font-size:25.6px;line-height:35.84px;color:#9da3b3;left:1975.00px;">0.4</div>
<div class="t" style="top:1627.25px;font-size:25.6px;line-height:35.84px;color:#9da3b3;left:1975.00px;">0.6</div>
<div class="t" style="top:1544.05px;font-size:25.6px;line-height:35.84px;color:#9da3b3;left:1975.00px;">0.8</div>
<div class="t" style="top:1460.85px;font-size:25.6px;line-height:35.84px;color:#9da3b3;left:1975.00px;">1</div>
<div class="t" style="top:1908.85px;font-size:25.6px;line-height:35.84px;color:#97989e;letter-spacing:0.8px;left:247.50px;width:300px;text-align:center;">Michael</div>
<div class="t" style="top:1908.85px;font-size:25.6px;line-height:35.84px;color:#97989e;letter-spacing:0.8px;left:457.50px;width:300px;text-align:center;">Jack</div>
<div class="t" style="top:1908.85px;font-size:25.6px;line-height:35.84px;color:#97989e;letter-spacing:0.8px;left:673.00px;width:300px;text-align:center;">Harry</div>
<div class="t" style="top:1908.85px;font-size:25.6px;line-height:35.84px;color:#97989e;letter-spacing:0.8px;left:901.00px;width:300px;text-align:center;">Lilith</div>
<div class="t" style="top:1908.85px;font-size:25.6px;line-height:35.84px;color:#97989e;letter-spacing:0.8px;left:1140.00px;width:300px;text-align:center;">Tim</div>
<div class="t" style="top:1908.85px;font-size:25.6px;line-height:35.84px;color:#97989e;letter-spacing:0.8px;left:1424.00px;width:300px;text-align:center;">Nick</div>
<div class="t" style="top:1908.85px;font-size:25.6px;line-height:35.84px;color:#97989e;letter-spacing:0.8px;left:1727.00px;width:300px;text-align:center;">Tom</div>
<div class="t" style="top:1404.87px;font-size:25.6px;line-height:35.84px;color:#97989e;left:953.50px;">总工时</div>
<div class="t" style="top:1404.87px;font-size:25.6px;line-height:35.84px;color:#97989e;left:1113.50px;">实际工时</div>
<div class="t" style="top:1404.87px;font-size:25.6px;line-height:35.84px;color:#97989e;left:1301.50px;">载荷比</div>
<div class="t" style="top:1876.85px;font-size:25.6px;line-height:35.84px;color:#9da3b3;right:1827.00px;text-align:right;">0</div>
<div class="t" style="top:1817.21px;font-size:25.6px;line-height:35.84px;color:#9da3b3;right:1827.00px;text-align:right;">1,000</div>
<div class="t" style="top:1757.56px;font-size:25.6px;line-height:35.84px;color:#9da3b3;right:1827.00px;text-align:right;">2,000</div>
<div class="t" style="top:1697.92px;font-size:25.6px;line-height:35.84px;color:#9da3b3;right:1827.00px;text-align:right;">3,000</div>
<div class="t" style="top:1638.28px;font-size:25.6px;line-height:35.84px;color:#9da3b3;right:1827.00px;text-align:right;">4,000</div>
<div class="t" style="top:1578.63px;font-size:25.6px;line-height:35.84px;color:#9da3b3;right:1827.00px;text-align:right;">5,000</div>
<div class="t" style="top:1518.99px;font-size:25.6px;line-height:35.84px;color:#9da3b3;right:1827.00px;text-align:right;">6,000</div>
<div class="t" style="top:1459.35px;font-size:25.6px;line-height:35.84px;color:#9da3b3;right:1827.00px;text-align:right;">7,000</div>
<div class="t" style="top:1914.37px;font-size:25.6px;line-height:35.84px;color:#97989e;left:2278.00px;width:300px;text-align:center;">产品研发1组</div>
<div class="t" style="top:1914.37px;font-size:25.6px;line-height:35.84px;color:#97989e;left:2547.50px;width:300px;text-align:center;">产品研发3组</div>
<div class="t" style="top:1914.37px;font-size:25.6px;line-height:35.84px;color:#97989e;left:2837.50px;width:300px;text-align:center;">产品研发4组</div>
<div class="t" style="top:1914.37px;font-size:25.6px;line-height:35.84px;color:#97989e;left:3106.00px;width:300px;text-align:center;">产品研发2组</div>
<div class="t" style="top:1914.37px;font-size:25.6px;line-height:35.84px;color:#97989e;left:3385.50px;width:300px;text-align:center;">项目交付2组</div>
<div class="t" style="top:1914.37px;font-size:25.6px;line-height:35.84px;color:#97989e;left:3665.00px;width:300px;text-align:center;">项目交付3组</div>
<div class="t" style="top:1425.87px;font-size:25.6px;line-height:35.84px;color:#97989e;left:2848.00px;">无效时间</div>
<div class="t" style="top:1425.87px;font-size:25.6px;line-height:35.84px;color:#97989e;left:3035.50px;">有效时间</div>
<div class="t" style="top:1425.87px;font-size:25.6px;line-height:35.84px;color:#97989e;left:3223.50px;">其他状态</div>
</body></html>
